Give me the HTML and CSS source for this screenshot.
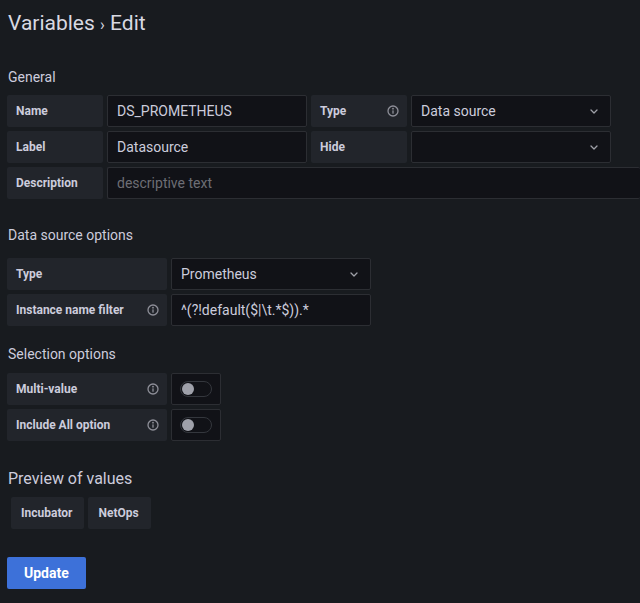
FILE: index.html
```html
<!DOCTYPE html>
<html>
<head>
<meta charset="utf-8">
<link rel="stylesheet" href="styles.css">
</head>
<body>
<div class="page">
  <h1 class="title">Variables <span class="sep">›</span> Edit</h1>

  <h5 class="section general">General</h5>
  <div class="rows">
    <div class="row">
      <div class="label w96">Name</div>
      <div class="input w200">DS_PROMETHEUS</div>
      <div class="label w96 has-icon">Type
        <svg class="info" viewBox="0 0 12 12"><circle cx="6" cy="6" r="5" fill="none" stroke="currentColor" stroke-width="1.3"/><circle cx="6" cy="3.7" r="0.9" fill="currentColor"/><rect x="5.35" y="5.2" width="1.3" height="3.6" rx="0.6" fill="currentColor"/></svg>
      </div>
      <div class="input w200 select">Data source
        <svg class="chev" viewBox="0 0 8 5"><path d="M1 1 L4 4 L7 1" fill="none" stroke="currentColor" stroke-width="1.3" stroke-linecap="round" stroke-linejoin="round"/></svg>
      </div>
    </div>
    <div class="row">
      <div class="label w96">Label</div>
      <div class="input w200">Datasource</div>
      <div class="label w96">Hide</div>
      <div class="input w200 select">
        <svg class="chev" viewBox="0 0 8 5"><path d="M1 1 L4 4 L7 1" fill="none" stroke="currentColor" stroke-width="1.3" stroke-linecap="round" stroke-linejoin="round"/></svg>
      </div>
    </div>
    <div class="row">
      <div class="label w96">Description</div>
      <div class="input wide placeholder">descriptive text</div>
    </div>
  </div>

  <h5 class="section ds">Data source options</h5>
  <div class="rows">
    <div class="row">
      <div class="label w160">Type</div>
      <div class="input w200 select">Prometheus
        <svg class="chev" viewBox="0 0 8 5"><path d="M1 1 L4 4 L7 1" fill="none" stroke="currentColor" stroke-width="1.3" stroke-linecap="round" stroke-linejoin="round"/></svg>
      </div>
    </div>
    <div class="row">
      <div class="label w160 has-icon">Instance name filter
        <svg class="info" viewBox="0 0 12 12"><circle cx="6" cy="6" r="5" fill="none" stroke="currentColor" stroke-width="1.3"/><circle cx="6" cy="3.7" r="0.9" fill="currentColor"/><rect x="5.35" y="5.2" width="1.3" height="3.6" rx="0.6" fill="currentColor"/></svg>
      </div>
      <div class="input w200">^(?!default($|\t.*$)).*</div>
    </div>
  </div>

  <h5 class="section sel">Selection options</h5>
  <div class="rows">
    <div class="row">
      <div class="label w160 has-icon">Multi-value
        <svg class="info" viewBox="0 0 12 12"><circle cx="6" cy="6" r="5" fill="none" stroke="currentColor" stroke-width="1.3"/><circle cx="6" cy="3.7" r="0.9" fill="currentColor"/><rect x="5.35" y="5.2" width="1.3" height="3.6" rx="0.6" fill="currentColor"/></svg>
      </div>
      <div class="switch-box"><div class="switch"><div class="knob"></div></div></div>
    </div>
    <div class="row">
      <div class="label w160 has-icon">Include All option
        <svg class="info" viewBox="0 0 12 12"><circle cx="6" cy="6" r="5" fill="none" stroke="currentColor" stroke-width="1.3"/><circle cx="6" cy="3.7" r="0.9" fill="currentColor"/><rect x="5.35" y="5.2" width="1.3" height="3.6" rx="0.6" fill="currentColor"/></svg>
      </div>
      <div class="switch-box"><div class="switch"><div class="knob"></div></div></div>
    </div>
  </div>

  <h5 class="preview">Preview of values</h5>
  <div class="chips">
    <div class="chip">Incubator</div>
    <div class="chip">NetOps</div>
  </div>

  <button class="btn">Update</button>
</div>
</body>
</html>
```
FILE: styles.css
```css
html, body {
  margin: 0;
  padding: 0;
  overflow: hidden;
  background: #181b1f;
}
body {
  font-family: Roboto, "Liberation Sans", sans-serif;
  color: #ccccdc;
  width: 640px;
  height: 603px;
}
.page {
  padding: 10px 0 0 7px;
}
.title {
  margin: 0 0 0 1px;
  font-size: 21px;
  line-height: 26px;
  font-weight: 400;
  color: #d8d9e2;
}
.sep {
  font-size: 16px;
}
.section {
  margin: 0 0 0 1px;
  font-size: 14px;
  line-height: 16px;
  font-weight: 400;
  color: #ccccdc;
}
.general { margin-top: 31px; margin-bottom: 10px; }
.ds { margin-top: 28px; margin-bottom: 15px; }
.sel { margin-top: 20px; margin-bottom: 11px; }
.rows {
  display: flex;
  flex-direction: column;
  gap: 4px;
}
.row {
  display: flex;
  gap: 4px;
  height: 32px;
}
.label {
  box-sizing: border-box;
  height: 32px;
  background: #22252b;
  border-radius: 2px;
  padding: 0 8px 0 9px;
  display: flex;
  align-items: center;
  font-size: 12px;
  font-weight: 700;
  color: #ccccdc;
  flex-shrink: 0;
}
.has-icon { justify-content: space-between; }
.w96 { width: 96px; }
.w160 { width: 160px; }
.w200 { width: 200px; }
.wide {
  flex: 1;
  min-width: 0;
  border-radius: 2px 0 0 2px;
}
.info {
  width: 12px;
  height: 12px;
  color: #8e8f98;
}
.input {
  box-sizing: border-box;
  height: 32px;
  background: #111217;
  border: 1px solid #2c2e33;
  border-radius: 2px;
  padding: 0 8px 0 9px;
  display: flex;
  align-items: center;
  font-size: 14px;
  color: #ccccdc;
  flex-shrink: 0;
}
.input.wide { border-right: 0; }
.placeholder { color: #6d6e75; }
.select { justify-content: space-between; padding-right: 12px; }
.chev {
  width: 8px;
  height: 5px;
  color: #9fa0a8;
  margin-left: auto;
}
.switch-box {
  box-sizing: border-box;
  width: 50px;
  height: 32px;
  background: #111217;
  border: 1px solid #2c2e33;
  border-radius: 2px;
  display: flex;
  align-items: center;
  justify-content: center;
}
.switch {
  box-sizing: border-box;
  width: 32px;
  height: 16px;
  border: 1px solid #34373d;
  border-radius: 8px;
  background: #111217;
  display: flex;
  align-items: center;
  padding-left: 1px;
}
.knob {
  width: 12px;
  height: 12px;
  border-radius: 50%;
  background: #9fa1aa;
}
.preview {
  margin: 29px 0 0 1px;
  font-size: 16px;
  line-height: 18px;
  font-weight: 400;
  color: #ccccdc;
}
.chips {
  display: flex;
  gap: 4px;
  margin: 9px 0 0 4px;
}
.chip {
  height: 32px;
  box-sizing: border-box;
  padding: 0 12px 0 10px;
  display: flex;
  align-items: center;
  background: #22252b;
  border-radius: 2px;
  font-size: 12px;
  font-weight: 700;
  color: #ccccdc;
}
.btn {
  margin-top: 28px;
  height: 32px;
  padding: 0 17px;
  background: #3d71d9;
  color: #ffffff;
  border: none;
  border-radius: 2px;
  font-family: Roboto, "Liberation Sans", sans-serif;
  font-size: 14px;
  font-weight: 700;
  display: block;
}
```
